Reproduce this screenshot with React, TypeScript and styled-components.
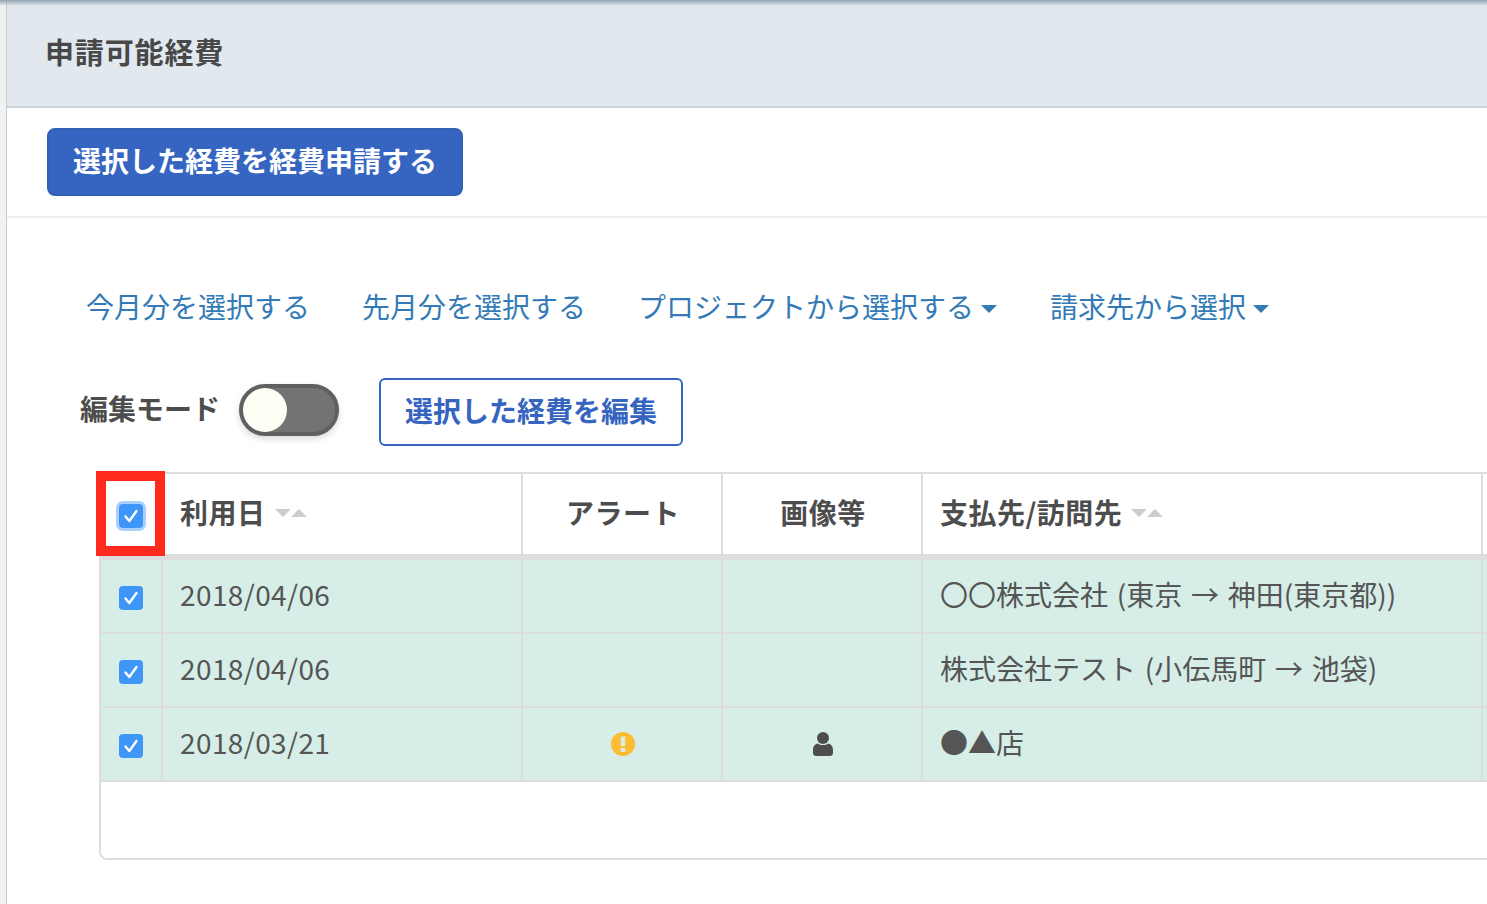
import React from "react";
import styled, { createGlobalStyle } from "styled-components";

const Global = createGlobalStyle`
  html, body { margin: 0; padding: 0; background: #fff; overflow: hidden; height: 100%; }
  body { font-family: "Noto Sans CJK JP", "Noto Sans", sans-serif; color: #4d4d4d; }
`;

const Page = styled.div`
  width: 1487px;
  height: 904px;
  overflow: hidden;
  display: flex;
  background: #eef2f3;
  position: relative;
`;
const TopShade = styled.div`
  position: absolute;
  left: 0; right: 0; top: 0;
  height: 6px;
  background: linear-gradient(#94a3b2, rgba(225,232,239,0));
`;
const Panel = styled.main`
  margin-left: 6px;
  flex: 1;
  min-width: 0;
  border-left: 1px solid #c9cccc;
  background: #fff;
`;
const Header = styled.header`
  box-sizing: content-box;
  background: #e1e9ef;
  border-bottom: 2px solid #cfd2d3;
  display: flex;
  align-items: center;
  padding: 0 0 4px 38px;
  height: 102px;
`;
const Title = styled.h1`
  margin: 0;
  font-size: 29px;
  font-weight: 700;
  letter-spacing: 0.85px;
  color: #484848;
  line-height: 1;
`;
const ActionBar = styled.div`
  height: 110px;
  box-sizing: border-box;
  padding: 20px 0 0 40px;
  border-bottom: 2px solid #eeeeee;
`;
const PrimaryButton = styled.button`
  width: 416px;
  height: 68px;
  border: 2px solid #3260b5;
  border-radius: 8px;
  background: #3565c0;
  color: #fff;
  font: 700 28px "Noto Sans CJK JP", sans-serif;
  padding: 0 0 4px;
  white-space: nowrap;
`;
const LinkRow = styled.nav`
  display: flex;
  align-items: center;
  padding: 66px 0 0 79px;
  height: 44px;
  font-size: 28px;
  color: #337ab7;
  line-height: 44px;
`;
const TextLink = styled.a<{ $w: number }>`
  width: ${(p) => p.$w}px;
  display: flex;
  align-items: center;
  white-space: nowrap;
`;
const Caret = styled.span`
  display: inline-block;
  width: 0;
  height: 0;
  margin-left: 7px;
  margin-top: 6px;
  border-left: 8px solid transparent;
  border-right: 8px solid transparent;
  border-top: 8px solid #337ab7;
`;
const ModeRow = styled.div`
  display: flex;
  align-items: center;
  padding: 50px 0 0 73px;
  height: 68px;
`;
const ModeLabel = styled.span`
  width: 159px;
  font-size: 28px;
  font-weight: 700;
  color: #4d4d4d;
  white-space: nowrap;
  margin-top: -8px;
`;
const Toggle = styled.span`
  width: 100px;
  height: 52px;
  border-radius: 26px;
  box-sizing: border-box;
  background: #737373;
  border: 4px solid #606060;
  box-shadow: 0 3px 6px rgba(0, 0, 0, 0.15);
  display: block;
  margin: 0 40px 4px 0;
`;
const Knob = styled.span`
  display: block;
  width: 44px;
  height: 44px;
  border-radius: 50%;
  background: #fdfff5;
`;
const OutlineButton = styled.button`
  width: 304px;
  height: 68px;
  border: 2px solid #3565c0;
  border-radius: 6px;
  background: #fff;
  color: #3565c0;
  font: 700 28px "Noto Sans CJK JP", sans-serif;
  padding: 0 0 4px;
  white-space: nowrap;
`;
const TableBox = styled.section`
  position: relative;
  margin: 26px 0 0 92px;
  width: 1500px;
  height: 388px;
  box-sizing: border-box;
  border: 2px solid #dddddd;
  border-radius: 0 0 0 8px;
`;
const Row = styled.div<{ $head?: boolean }>`
  display: grid;
  grid-template-columns: 62px 360px 200px 200px 560px 1fr;
  height: ${(p) => (p.$head ? 86 : 74)}px;
  box-sizing: border-box;
  background: ${(p) => (p.$head ? "#fff" : "#d6eee7")};
  border-bottom: ${(p) => (p.$head ? 6 : 2)}px solid #dddddd;
`;
const Cell = styled.div<{ $center?: boolean; $head?: boolean }>`
  display: flex;
  align-items: center;
  justify-content: ${(p) => (p.$center ? "center" : "flex-start")};
  padding-left: ${(p) => (p.$center ? 2 : 17)}px;
  border-right: 2px solid #dddddd;
  font-size: 28px;
  font-weight: ${(p) => (p.$head ? 700 : 400)};
  letter-spacing: ${(p) => (p.$head ? "0.5px" : "0")};
  word-spacing: 2.5px;
  color: ${(p) => (p.$head ? "#4d4d4d" : "#555555")};
  white-space: nowrap;
  overflow: hidden;
  box-sizing: border-box;
`;
const CellText = styled.span`
  display: flex;
  align-items: center;
  margin-bottom: 4px;
`;
const DateText = styled(CellText)`
  letter-spacing: 0.4px;
`;
const Sort = styled.span`
  display: inline-flex;
  margin-left: 9px;
  margin-top: 2px;
`;
const SortDown = styled.i`
  width: 0; height: 0;
  border-left: 8px solid transparent;
  border-right: 8px solid transparent;
  border-top: 8px solid #cccccc;
`;
const SortUp = styled.i`
  width: 0; height: 0;
  border-left: 8px solid transparent;
  border-right: 8px solid transparent;
  border-bottom: 8px solid #cccccc;
`;
const Check = styled.span<{ $focus?: boolean }>`
  width: 24px;
  height: 24px;
  margin: 4px 0 0 -2px;
  border-radius: 4px;
  background: #3e96f8;
  display: flex;
  align-items: center;
  justify-content: center;
  box-shadow: ${(p) => (p.$focus ? "0 0 0 3px #a9d0fb" : "none")};
`;
const RedFrame = styled.div`
  position: absolute;
  left: -5px;
  top: -3px;
  width: 69px;
  height: 85px;
  box-sizing: border-box;
  border: 10px solid #ff2a1e;
  pointer-events: none;
`;

const Tick = () => (
  <svg width="16" height="16" viewBox="0 0 16 16" fill="none">
    <path d="M2.5 8.5 L6.3 13 L13.5 3" stroke="#fff" strokeWidth="2.4" strokeLinecap="round" strokeLinejoin="round" />
  </svg>
);
const Alert = () => (
  <svg width="24" height="24" viewBox="0 0 24 24">
    <circle cx="12" cy="12" r="12" fill="#fdbd33" />
    <rect x="9.8" y="4.5" width="4.4" height="9.5" fill="#d6eee7" />
    <rect x="9.8" y="16" width="4.4" height="4" fill="#d6eee7" />
  </svg>
);
const Person = () => (
  <svg width="20" height="24" viewBox="0 0 20 24" fill="#4d4d4d">
    <circle cx="10" cy="6" r="6" />
    <path d="M5 11.5 C7 13.6 13 13.6 15 11.5 C18 12 20 14.5 20 18 L20 21 C20 23 18.5 24 17 24 L3 24 C1.5 24 0 23 0 21 L0 18 C0 14.5 2 12 5 11.5 Z" />
  </svg>
);
const SortIcons = () => (
  <Sort>
    <SortDown />
    <SortUp />
  </Sort>
);

const rows = [
  { date: "2018/04/06", place: "〇〇株式会社 (東京 → 神田(東京都))" },
  { date: "2018/04/06", place: "株式会社テスト (小伝馬町 → 池袋)" },
  { date: "2018/03/21", place: "●▲店", alert: true, image: true },
];

export default function App() {
  return (
    <Page>
      <Global />
      <TopShade />
      <Panel>
        <Header>
          <Title>申請可能経費</Title>
        </Header>
        <ActionBar>
          <PrimaryButton>選択した経費を経費申請する</PrimaryButton>
        </ActionBar>
        <LinkRow>
          <TextLink $w={276}>今月分を選択する</TextLink>
          <TextLink $w={276}>先月分を選択する</TextLink>
          <TextLink $w={412}>プロジェクトから選択する<Caret /></TextLink>
          <TextLink $w={240}>請求先から選択<Caret /></TextLink>
        </LinkRow>
        <ModeRow>
          <ModeLabel>編集モード</ModeLabel>
          <Toggle><Knob /></Toggle>
          <OutlineButton>選択した経費を編集</OutlineButton>
        </ModeRow>
        <TableBox>
          <Row $head>
            <Cell $center $head><Check $focus><Tick /></Check></Cell>
            <Cell $head><CellText>利用日<SortIcons /></CellText></Cell>
            <Cell $center $head><CellText>アラート</CellText></Cell>
            <Cell $center $head><CellText>画像等</CellText></Cell>
            <Cell $head><CellText>支払先/訪問先<SortIcons /></CellText></Cell>
            <Cell $head />
          </Row>
          {rows.map((r, i) => (
            <Row key={i}>
              <Cell $center><Check><Tick /></Check></Cell>
              <Cell><DateText>{r.date}</DateText></Cell>
              <Cell $center>{r.alert && <Alert />}</Cell>
              <Cell $center>{r.image && <Person />}</Cell>
              <Cell><CellText>{r.place}</CellText></Cell>
              <Cell />
            </Row>
          ))}
          <RedFrame />
        </TableBox>
      </Panel>
    </Page>
  );
}
